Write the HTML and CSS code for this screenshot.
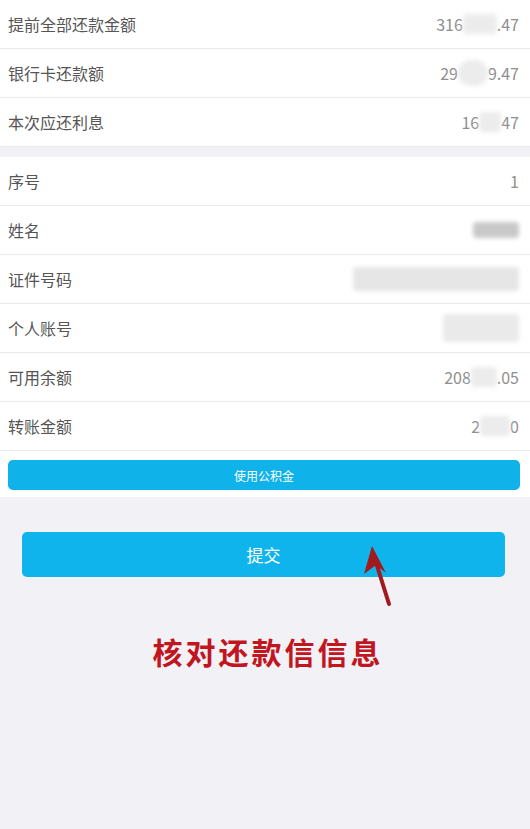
FILE: index.html
```html
<!DOCTYPE html>
<html>
	<head>
		<meta charset="utf-8">
		<title>核对还款信息</title>
		<link rel="stylesheet" href="styles.css">
	</head>
	<body>
		<div class="page">
			<div class="group">
				<div class="row"><span class="label">提前全部还款金额</span><span class="value">316<span class="mask w34"></span>.47</span></div>
				<div class="row"><span class="label">银行卡还款额</span><span class="value">29<span class="mask w30 round"></span>9.47</span></div>
				<div class="row"><span class="label">本次应还利息</span><span class="value">16<span class="mask w22"></span>47</span></div>
			</div>

			<div class="group second">
				<div class="row"><span class="label">序号</span><span class="value">1</span></div>
				<div class="row"><span class="label">姓名</span><span class="value"><span class="mask name"></span></span></div>
				<div class="row"><span class="label">证件号码</span><span class="value"><span class="mask idcard"></span></span></div>
				<div class="row"><span class="label">个人账号</span><span class="value"><span class="mask account"></span></span></div>
				<div class="row"><span class="label">可用余额</span><span class="value">208<span class="mask w26"></span>.05</span></div>
				<div class="row"><span class="label">转账金额</span><span class="value">2<span class="mask w30"></span>0</span></div>
				<div class="small-btn-wrap">
					<button class="small-btn">使用公积金</button>
				</div>
			</div>

			<div class="submit-wrap">
				<button class="submit">提交</button>
				<svg class="arrow" width="50" height="80" viewBox="0 0 50 80">
					<path d="M37 64 L22 16" stroke="#a01a1e" stroke-width="4" stroke-linecap="round" fill="none"/>
					<path d="M20 6 L34 33 L24 25 L12 34 Z" fill="#a01a1e"/>
				</svg>
			</div>

			<div class="note">核对还款信信息</div>
		</div>
	</body>
</html>
```

FILE: styles.css
```css
* {
	box-sizing: border-box;
}
body {
	margin: 0;
	background: #f2f1f6;
	font-family: "Noto Sans CJK SC", "Noto Sans", sans-serif;
}
.page {
	width: 530px;
	min-height: 829px;
}
.group {
	background: #ffffff;
}
.second {
	margin-top: 10px;
}
.row {
	height: 49px;
	display: flex;
	align-items: center;
	justify-content: space-between;
	padding: 0 11px 0 8px;
	border-bottom: 1px solid #e9e9ee;
}
.label {
	font-size: 16px;
	color: #555555;
}
.value {
	display: flex;
	align-items: center;
	font-size: 16px;
	color: #8f8f8f;
}
.mask {
	display: inline-block;
	height: 20px;
	background: #ececec;
	filter: blur(2px);
	border-radius: 4px;
}
.w22 { width: 22px; }
.w26 { width: 26px; }
.w30 { width: 30px; }
.w34 { width: 34px; }
.round {
	height: 26px;
	border-radius: 13px;
}
.name {
	width: 46px;
	height: 16px;
	background: #c9c9c9;
}
.idcard {
	width: 166px;
	height: 24px;
	background: #e6e6e6;
}
.account {
	width: 76px;
	height: 28px;
	background: #eaeaea;
}
.small-btn-wrap {
	padding: 9px 10px 7px 8px;
}
.small-btn {
	display: block;
	width: 100%;
	height: 30px;
	border: 0;
	border-radius: 5px;
	background: #10b2ea;
	color: #ffffff;
	font-family: inherit;
	font-size: 12px;
}
.submit-wrap {
	position: relative;
	padding: 35px 25px 0 22px;
}
.submit {
	display: block;
	width: 100%;
	height: 45px;
	border: 0;
	border-radius: 5px;
	background: #10b4ec;
	color: #ffffff;
	font-family: inherit;
	font-size: 17px;
}
.arrow {
	position: absolute;
	left: 352px;
	top: 43px;
}
.note {
	margin-top: 52px;
	text-align: center;
	padding-left: 6px;
	font-size: 30px;
	font-weight: 700;
	letter-spacing: 3px;
	color: #c1161f;
}
```
